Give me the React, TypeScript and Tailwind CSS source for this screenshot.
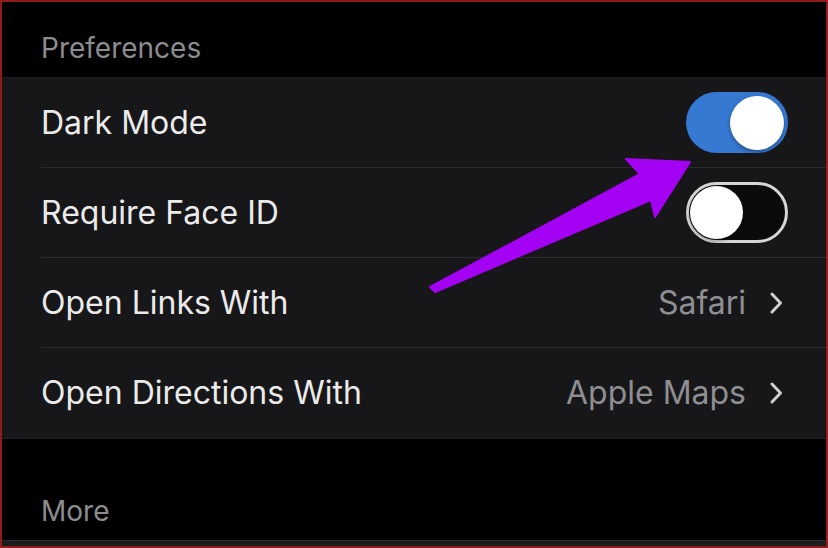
import { ReactNode } from "react";

function Toggle({ on }: { on: boolean }) {
  if (on) {
    return (
      <div className="w-[102px] h-[61px] rounded-full bg-[#3679d2] flex items-center justify-end pr-[4px]">
        <div className="w-[54px] h-[54px] rounded-full bg-white shadow-[0_2px_4px_rgba(0,0,0,0.35)]" />
      </div>
    );
  }
  return (
    <div className="w-[102px] h-[61px] rounded-full border-[3px] border-[#d6d6d6] bg-[#0b0b0c] flex items-center pl-[1px]">
      <div className="w-[53px] h-[53px] rounded-full bg-white shadow-[0_2px_4px_rgba(0,0,0,0.35)]" />
    </div>
  );
}

function Chevron() {
  return (
    <svg width="14" height="24" viewBox="0 0 14 24" className="ml-[23px]">
      <path d="M3 3 L11.5 12 L3 21" fill="none" stroke="#cfcfcf" strokeWidth="3" strokeLinecap="round" strokeLinejoin="round" />
    </svg>
  );
}

function Row({ label, last, wide, children }: { label: string; last?: boolean; wide?: boolean; children: ReactNode }) {
  return (
    <div className="pl-[39px] h-[90px]">
      <div
        className={`h-full flex items-center justify-between ${wide ? "pr-[43px]" : "pr-[38px]"} ${last ? "" : "border-b border-[#2b2b2d]"}`}
      >
        <span className="text-[32px] text-[#ebebeb]">{label}</span>
        {children}
      </div>
    </div>
  );
}

export default function App() {
  return (
    <div
      className="relative w-[828px] h-[548px] border-2 border-[#8e1c1c] bg-black flex flex-col overflow-hidden"
      style={{ fontFamily: "Inter, 'Open Sans', sans-serif" }}
    >
      <div className="h-[76px] pl-[39px] flex items-end pb-[8px] border-b border-[#1f1f21]">
        <span className="text-[28px] text-[#8c8c91]">Preferences</span>
      </div>

      <div className="bg-[#171719]">
        <Row label="Dark Mode">
          <Toggle on />
        </Row>
        <Row label="Require Face ID">
          <Toggle on={false} />
        </Row>
        <Row label="Open Links With" wide>
          <div className="flex items-center">
            <span className="text-[32px] text-[#8e8e93]">Safari</span>
            <Chevron />
          </div>
        </Row>
        <Row label="Open Directions With" last wide>
          <div className="flex items-center">
            <span className="text-[32px] text-[#8e8e93]">Apple Maps</span>
            <Chevron />
          </div>
        </Row>
      </div>

      <div className="flex-1 border-t border-[#222224] pl-[39px] flex items-end pb-[8px]">
        <span className="text-[28px] text-[#8c8c91]">More</span>
      </div>
      <div className="h-[6px] bg-[#1c1c1e] border-t border-[#2b2b2d]" />

      {/* pointer arrow laid over the toggle */}
      <svg className="absolute left-0 top-0 pointer-events-none" width="828" height="548" viewBox="-2 -2 828 548">
        <polygon
          points="426,283 636,170 622,155 686,158 651,213 647,196 431,288"
          fill="#a402f2"
          stroke="#a402f2"
          strokeWidth="2"
          strokeLinejoin="round"
        />
      </svg>
    </div>
  );
}
